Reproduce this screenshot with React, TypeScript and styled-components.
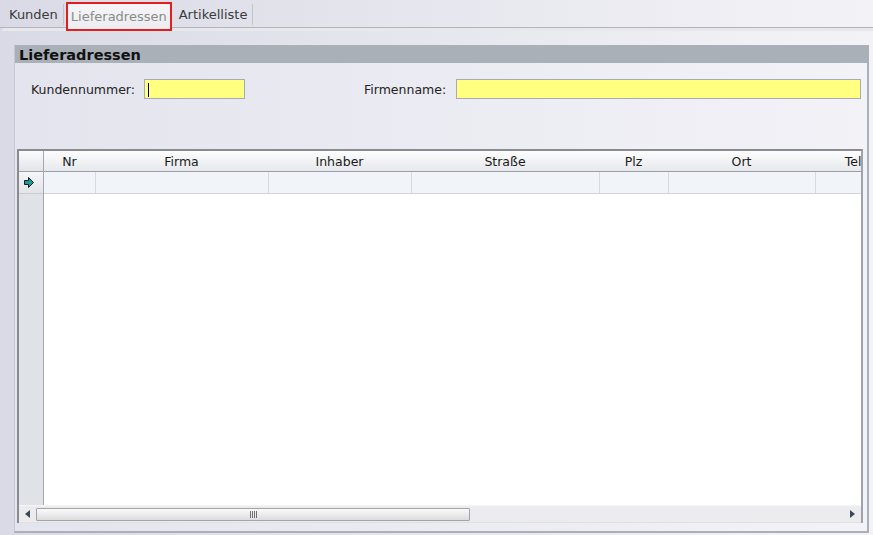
import React from "react";
import styled, { createGlobalStyle } from "styled-components";

const GlobalStyle = createGlobalStyle`
  html, body {
    margin: 0;
    padding: 0;
  }
  body {
    font-family: "DejaVu Sans", Verdana, sans-serif;
    font-size: 12px;
    color: #222;
  }
`;

const Screen = styled.div`
  width: 873px;
  height: 535px;
  overflow: hidden;
  display: flex;
  flex-direction: column;
  background: linear-gradient(to right, #dadae6, #f3f3f7);
`;

const TabBar = styled.div`
  height: 27px;
  display: flex;
  align-items: stretch;
  padding-left: 2px;
  border-bottom: 1px solid #b4b4b8;
  position: relative;
`;

const Tab = styled.div<{ $active?: boolean }>`
  display: flex;
  align-items: center;
  padding: 0 5px;
  margin-right: 2px;
  font-size: 13px;
  color: ${(p) => (p.$active ? "#8a8a8a" : "#3a3a3a")};
  border-right: ${(p) => (p.$active ? "none" : "1px solid #c4c4c8")};
  margin-top: ${(p) => (p.$active ? "2px" : "4px")};
  margin-bottom: ${(p) => (p.$active ? "-4px" : "2px")};
  background: ${(p) =>
    p.$active ? "linear-gradient(#f6f6f8, #ececf0)" : "transparent"};
  outline: ${(p) => (p.$active ? "2px solid #e02020" : "none")};
  outline-offset: -2px;
  position: relative;
  z-index: 1;
  &:first-child {
    padding-left: 7px;
  }
`;

const TabBand = styled.div`
  height: 3px;
  margin-left: 2px;
  background: #e8e8ec;
  border-top-left-radius: 3px;
`;

const Body = styled.div`
  flex: 1;
  min-height: 0;
  padding: 14px 4px 2px 14px;
  display: flex;
`;

const Panel = styled.div`
  flex: 1;
  min-width: 0;
  overflow: hidden;
  display: flex;
  flex-direction: column;
  border-left: 1px solid #c4c8d0;
  border-right: 2px solid #a9b0b8;
  border-bottom: 2px solid #a9b0b8;
  background: linear-gradient(to right, #e4e4ee, #f2f2f7);
`;

const PanelTitle = styled.div`
  height: 18px;
  line-height: 21px;
  background: #a9b0b8;
  padding-left: 4px;
  font-size: 14.5px;
  font-weight: bold;
  color: #111;
  overflow: hidden;
`;

const FormRow = styled.div`
  display: flex;
  align-items: center;
  margin-top: 15px;
  padding-left: 16px;
  height: 22px;
`;

const Label = styled.label<{ $width: number }>`
  width: ${(p) => p.$width}px;
  flex: none;
  font-size: 12.5px;
  color: #222;
`;

const Field = styled.div<{ $width: number; $gapAfter?: number }>`
  width: ${(p) => p.$width}px;
  flex: none;
  height: 20px;
  box-sizing: border-box;
  border: 1px solid #a4acbc;
  background: #ffff80;
  margin-right: ${(p) => p.$gapAfter ?? 0}px;
  position: relative;
`;

const Caret = styled.span`
  position: absolute;
  left: 3px;
  top: 3px;
  width: 1px;
  height: 14px;
  background: #000;
`;

const Grid = styled.div`
  margin: 49px 4px 8px 2px;
  flex: 1;
  min-width: 0;
  display: flex;
  flex-direction: column;
  border-top: 2px solid #888c92;
  border-left: 2px solid #888c92;
  border-right: 2px solid #a0a4aa;
  background: #fff;
  overflow: hidden;
`;

const GridMain = styled.div`
  flex: 1;
  display: flex;
  min-height: 0;
  min-width: 0;
`;

const Indicator = styled.div`
  width: 24px;
  flex: none;
  display: flex;
  flex-direction: column;
  background: #dfe2e6;
  border-right: 1px solid #a4a8b0;
`;

const IndicatorHead = styled.div`
  height: 20px;
  background: linear-gradient(#fbfbfc, #e2e4e8);
  border-bottom: 1px solid #9aa0a8;
`;

const IndicatorCell = styled.div`
  height: 21px;
  background: linear-gradient(#f4f5f7, #e2e4e8);
  border-bottom: 1px solid #c8ccd2;
  display: flex;
  align-items: center;
  padding-left: 5px;
`;

const Columns = styled.div`
  flex: 1;
  min-width: 0;
  display: flex;
  flex-direction: column;
  overflow: hidden;
`;

const HeadRow = styled.div`
  height: 20px;
  display: flex;
  background: linear-gradient(#fdfdfd, #e6e8ec);
  border-bottom: 1px solid #9aa0a8;
  flex: none;
`;

const HeadCell = styled.div<{ $width: number }>`
  width: ${(p) => p.$width}px;
  flex: none;
  display: flex;
  align-items: center;
  justify-content: center;
  font-size: 12.5px;
  color: #1a1a1a;
  position: relative;
  white-space: nowrap;
  & + &::before {
    content: "";
    position: absolute;
    left: 0;
    top: 3px;
    bottom: 2px;
    width: 1px;
    background: #b4b8be;
  }
`;

const DataRow = styled.div`
  height: 21px;
  display: flex;
  background: #f1f4f9;
  border-bottom: 1px solid #d0d4da;
  flex: none;
`;

const DataCell = styled.div<{ $width: number }>`
  width: ${(p) => p.$width}px;
  flex: none;
  box-sizing: border-box;
  & + & {
    border-left: 1px solid #d6dae0;
  }
`;

const ScrollBar = styled.div`
  height: 16px;
  display: flex;
  align-items: center;
  background: #ececee;
  border-top: 1px solid #f6f6f6;
  border-bottom: 1px solid #e0e0e2;
  flex: none;
`;

const ScrollArrow = styled.div`
  width: 17px;
  height: 16px;
  display: flex;
  align-items: center;
  justify-content: center;
  flex: none;
`;

const Track = styled.div`
  flex: 1;
  min-width: 0;
  height: 16px;
  display: flex;
  align-items: center;
`;

const Thumb = styled.div`
  width: 434px;
  height: 13px;
  box-sizing: border-box;
  border: 1px solid #a4a4a8;
  border-radius: 1px;
  background: linear-gradient(#fafafa, #dcdcde);
  display: flex;
  align-items: center;
  justify-content: center;
  gap: 1px;
`;

const Grip = styled.span`
  width: 1px;
  height: 7px;
  background: #707070;
`;

const columns = [
  { name: "Nr", width: 51 },
  { name: "Firma", width: 173 },
  { name: "Inhaber", width: 143 },
  { name: "Straße", width: 188 },
  { name: "Plz", width: 69 },
  { name: "Ort", width: 147 },
  { name: "Telefon", width: 104 },
];

const RowArrow = () => (
  <svg width="10" height="11" viewBox="0 0 10 11">
    <path d="M0.5 3.5 H4.5 V0.5 L9.5 5.5 L4.5 10.5 V7.5 H0.5 Z" fill="#1f9a8e" stroke="#0e1e22" strokeWidth="1" />
  </svg>
);

const Triangle = ({ dir }: { dir: "left" | "right" }) => (
  <svg width="5" height="8" viewBox="0 0 5 8">
    {dir === "left" ? (
      <path d="M5 0 V8 L0 4 Z" fill="#3a4a5c" />
    ) : (
      <path d="M0 0 V8 L5 4 Z" fill="#3a4a5c" />
    )}
  </svg>
);

export default function App() {
  return (
    <>
      <GlobalStyle />
      <Screen>
        <TabBar>
          <Tab>Kunden</Tab>
          <Tab $active>Lieferadressen</Tab>
          <Tab>Artikelliste</Tab>
        </TabBar>
        <TabBand />
        <Body>
          <Panel>
            <PanelTitle>Lieferadressen</PanelTitle>
            <FormRow>
              <Label $width={113}>Kundennummer:</Label>
              <Field $width={101} $gapAfter={119}>
                <Caret />
              </Field>
              <Label $width={92}>Firmenname:</Label>
              <Field $width={405} />
            </FormRow>
            <Grid>
              <GridMain>
                <Indicator>
                  <IndicatorHead />
                  <IndicatorCell>
                    <RowArrow />
                  </IndicatorCell>
                </Indicator>
                <Columns>
                  <HeadRow>
                    {columns.map((c) => (
                      <HeadCell key={c.name} $width={c.width}>
                        {c.name}
                      </HeadCell>
                    ))}
                  </HeadRow>
                  <DataRow>
                    {columns.map((c) => (
                      <DataCell key={c.name} $width={c.width} />
                    ))}
                  </DataRow>
                </Columns>
              </GridMain>
              <ScrollBar>
                <ScrollArrow>
                  <Triangle dir="left" />
                </ScrollArrow>
                <Track>
                  <Thumb>
                    <Grip />
                    <Grip />
                    <Grip />
                    <Grip />
                  </Thumb>
                </Track>
                <ScrollArrow>
                  <Triangle dir="right" />
                </ScrollArrow>
              </ScrollBar>
            </Grid>
          </Panel>
        </Body>
      </Screen>
    </>
  );
}
